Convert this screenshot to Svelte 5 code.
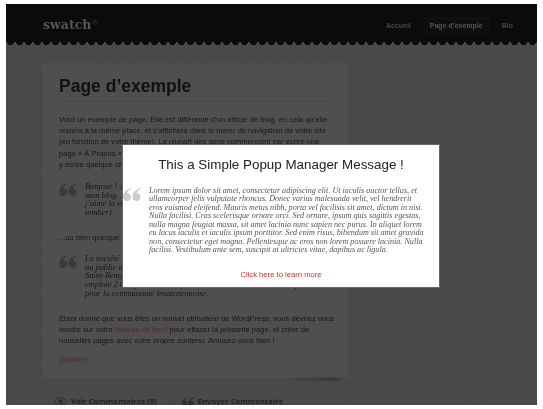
<script lang="ts">
  const nav = ["Accueil", "Page d’exemple", "Bio"];
</script>

<div class="frame">
  <header class="top">
    <div class="logo">swatch<span>*</span></div>
    <nav>
      {#each nav as item, i}
        <a href="#top" class:current={i === 1}>{item}</a>
      {/each}
    </nav>
  </header>
  <div class="scallop"></div>

  <main class="card">
    <h1>Page d’exemple</h1>
    <p>Voici un exemple de page. Elle est différente d’un article de blog, en cela qu’elle<br />
      restera à la même place, et s’affichera dans le menu de navigation de votre site<br />
      (en fonction de votre thème). La plupart des gens commencent par écrire une<br />
      page « À Propos » qui les présente aux visiteurs potentiels du site. Vous pourriez<br />
      y écrire quelque chose de ce genre :</p>

    <blockquote>
      <svg class="mark" viewBox="0 0 18 13"><path d="M8.500 0C4 1 0 4 0 9c0 2.400 1.700 4 4 4s4-1.800 4-4-1.700-3.800-3.800-3.800c.3-2 2-3.700 4.300-4.200zM18 0c-4.500 1-8.500 4-8.500 9 0 2.400 1.700 4 4 4s4-1.800 4-4-1.700-3.800-3.800-3.800c.3-2 2-3.700 4.300-4.200z" /></svg>
      <div>Bonjour ! Je suis un mécanicien qui aspire à devenir acteur, et voici<br />
        mon blog. J’habite à Bordeaux, j’ai un super chien baptisé Russell, et<br />
        j’aime la vodka-ananas (ainsi que perdre mon chemin et me laisser<br />
        tomber).</div>
    </blockquote>

    <p class="or">...ou bien quelque chose comme cela :</p>

    <blockquote class="second">
      <svg class="mark" viewBox="0 0 18 13"><path d="M8.500 0C4 1 0 4 0 9c0 2.400 1.700 4 4 4s4-1.800 4-4-1.700-3.800-3.800-3.800c.3-2 2-3.700 4.300-4.200zM18 0c-4.500 1-8.500 4-8.500 9 0 2.400 1.700 4 4 4s4-1.800 4-4-1.700-3.800-3.800-3.800c.3-2 2-3.700 4.300-4.200z" /></svg>
      <div>La société 123 Machin Truc a été créée en 1971, et n’a cessé de proposer<br />
        au public des produits de qualité. Située à Saint-Remy-en-Bouzemont-<br />
        Saint-Remy-Genest-et-Isson, la société<br />
        emploie 2 000 personnes, et fait toutes sortes de choses remarquables<br />
        pour la communauté bouzemontoise.</div>
    </blockquote>

    <p class="end">Etant donné que vous êtes un nouvel utilisateur de WordPress, vous devriez vous<br />
      rendre sur votre <a href="#top">tableau de bord</a> pour effacer la présente page, et créer de<br />
      nouvelles pages avec votre propre contenu. Amusez-vous bien !</p>

    <a class="edit" href="#top">(Modifier)</a>
  </main>

  <footer class="actions">
    <span class="action">
      <svg viewBox="0 0 13 9" width="13" height="9"><path d="M0.5 4.5C2.500 1.500 4.500 .5 6.500 .5s4 1 6 4c-2 3-4 4-6 4s-4-1-6-4z" fill="none" stroke="#2e2e2e" stroke-width="1" /><circle cx="6.500" cy="4.500" r="2.300" fill="#2e2e2e" /></svg>
      Voir Commentaires (0)
    </span>
    <i></i>
    <span class="action">
      <svg viewBox="0 0 18 13" width="12" height="9" fill="#2e2e2e"><path d="M8.500 0C4 1 0 4 0 9c0 2.400 1.700 4 4 4s4-1.800 4-4-1.700-3.800-3.800-3.800c.3-2 2-3.700 4.300-4.200zM18 0c-4.500 1-8.500 4-8.500 9 0 2.400 1.700 4 4 4s4-1.800 4-4-1.700-3.800-3.800-3.800c.3-2 2-3.700 4.300-4.200z" /></svg>
      Envoyer Commentaire
    </span>
  </footer>

  <div class="popup">
    <h2>This a Simple Popup Manager Message !</h2>
    <div class="message">
      <svg class="mark" viewBox="0 0 18 13"><path d="M8.500 0C4 1 0 4 0 9c0 2.400 1.700 4 4 4s4-1.800 4-4-1.700-3.800-3.800-3.800c.3-2 2-3.700 4.300-4.200zM18 0c-4.500 1-8.500 4-8.500 9 0 2.400 1.700 4 4 4s4-1.800 4-4-1.700-3.800-3.800-3.800c.3-2 2-3.700 4.300-4.200z" /></svg>
      <p>Lorem ipsum dolor sit amet, consectetur adipiscing elit. Ut iaculis auctor tellus, et<br />
        ullamcorper felis vulputate rhoncus. Donec varius malesuada velit, vel hendrerit<br />
        eros euismod eleifend. Mauris metus nibh, porta vel facilisis sit amet, dictum in nisi.<br />
        Nulla facilisi. Cras scelerisque ornare orci. Sed ornare, ipsum quis sagittis egestas,<br />
        nulla magna feugiat massa, sit amet lacinia nunc sapien nec purus. In aliquet lorem<br />
        eu lacus iaculis et iaculis ipsum porttitor. Sed enim risus, bibendum sit amet gravida<br />
        non, consectetur eget magna. Pellentesque ac eros non lorem posuere lacinia. Nulla<br />
        facilisi. Vestibulum ante sem, suscipit at ultricies vitae, dapibus ac ligula.</p>
    </div>
    <a href="#top">Click here to learn more</a>
  </div>
</div>

<style>
  :global(body) {
    background: #fff;
    font-family: "Liberation Sans", Arial, sans-serif;
  }

  .frame {
    background-color: #4a4a4a;
    background-image: repeating-linear-gradient(45deg, rgba(0, 0, 0, 0.025) 0 1px, transparent 1px 3px);
    box-sizing: border-box;
    filter: blur(0.3px);
    height: 401px;
    margin: 4px 6px 0;
    overflow: hidden;
    position: relative;
    width: 531px;
  }

  .top {
    align-items: center;
    background-color: #0b0b0b;
    box-sizing: border-box;
    display: flex;
    height: 38px;
    justify-content: space-between;
    padding: 0 17px 0 37px;
  }

  .logo {
    color: #565656;
    font-family: "DejaVu Serif", serif;
    font-size: 12.5px;
    font-weight: bold;
    margin-top: 3px;
  }

  .logo span {
    color: #3f1b1b;
  }

  nav {
    display: flex;
    gap: 5px;
    margin-top: 5px;
  }

  nav a {
    color: #484848;
    font-size: 7px;
    font-weight: bold;
    line-height: 17px;
    padding: 0 7px;
    text-decoration: none;
  }

  nav a.current {
    background: #0f0f0f;
    color: #565656;
  }

  .scallop {
    background: radial-gradient(circle at 50% 0, #0b0b0b 3px, transparent 3.6px) repeat-x 0 0 / 9px 4px;
    height: 4px;
  }

  .card {
    background: #4f4f4f;
    box-sizing: border-box;
    color: #171717;
    font-size: 7.6px;
    height: 315px;
    line-height: 11.2px;
    margin: 17px 0 0 37px;
    padding: 13px 16px 0;
    position: relative;
    width: 305px;
  }

  /* ombre sous le coin droit */
  .card::after {
    background: linear-gradient(90deg, transparent, #2c2c2c 85%, transparent);
    bottom: -2px;
    content: "";
    filter: blur(1px);
    height: 2px;
    position: absolute;
    right: 4px;
    width: 60px;
  }

  h1 {
    border-bottom: 1px solid #484848;
    color: #111;
    font-size: 17.5px;
    line-height: 20px;
    margin: 0 0 12px;
    padding-bottom: 5px;
  }

  p {
    margin: 0;
    white-space: nowrap;
  }

  blockquote {
    display: flex;
    font-family: "Liberation Serif", serif;
    font-size: 8.4px;
    font-style: italic;
    gap: 8px;
    line-height: 8.7px;
    margin: 13px 0 0;
    white-space: nowrap;
  }

  .second {
    margin-top: 12px;
  }

  .mark {
    fill: #3a3a3a;
    flex: none;
    height: 13px;
    width: 18px;
  }

  .or {
    margin-top: 14px;
  }

  .end {
    margin-top: 14px;
  }

  .end a {
    color: #572824;
    text-decoration: none;
  }

  .edit {
    color: #572824;
    display: block;
    font-size: 6.6px;
    margin-top: 8px;
    text-decoration: none;
  }

  .actions {
    align-items: center;
    color: #232323;
    display: flex;
    font-family: "Open Sans", sans-serif;
    font-size: 7.7px;
    font-weight: bold;
    gap: 12px;
    margin: 17px 0 0 48px;
  }

  .action {
    align-items: center;
    display: flex;
    gap: 4px;
    white-space: nowrap;
  }

  .actions i {
    background: #444;
    height: 12px;
    width: 1px;
  }

  .popup {
    background: #fff;
    border: 1px solid #666;
    box-sizing: border-box;
    display: flex;
    flex-direction: column;
    height: 144px;
    left: 116px;
    padding-top: 11px;
    position: absolute;
    text-align: center;
    top: 140px;
    width: 318px;
  }

  h2 {
    color: #222;
    font-size: 13.4px;
    font-weight: normal;
    line-height: 18px;
    margin: 0 0 12.7px;
  }

  .message {
    color: #555;
    display: flex;
    font-family: "Liberation Serif", serif;
    font-size: 8.15px;
    font-style: italic;
    gap: 8px;
    line-height: 8.53px;
    text-align: left;
  }

  .message .mark {
    fill: #ccc;
    margin-top: 1.5px;
  }

  .popup a {
    color: #c0392b;
    font-size: 7.65px;
    margin-top: 15.5px;
    text-decoration: none;
  }
</style>
